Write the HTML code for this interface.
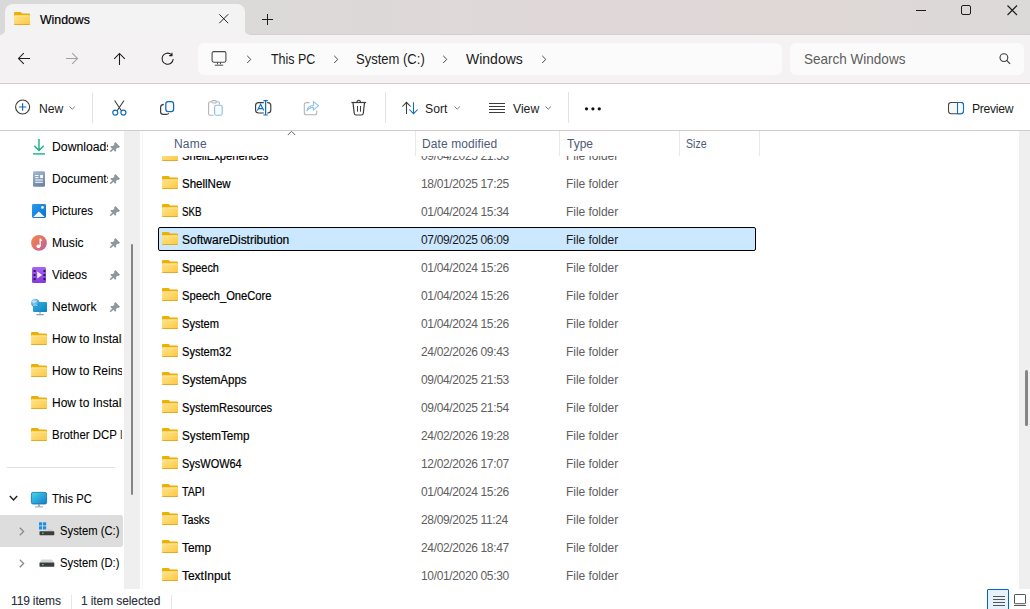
<!DOCTYPE html>
<html><head><meta charset="utf-8">
<style>
*{margin:0;padding:0;box-sizing:border-box}
html,body{width:1030px;height:609px;overflow:hidden;background:#fff;font-family:"Liberation Sans",sans-serif;color:#1a1a1a}
.a{position:absolute}
svg{position:absolute;overflow:visible}
#title{left:0;top:0;width:1030px;height:35px;background:linear-gradient(90deg,#dad9d9 0%,#dcd9d9 25%,#e0d8d8 55%,#dfd8d7 80%,#dcd9d9 100%)}
#tab{left:5px;top:4px;width:240px;height:31px;background:#f3f3f3;border-radius:8px 8px 0 0}
#addr{left:0;top:35px;width:1030px;height:48px;background:#f4f2f2}
.line{background:#d2cbcb;height:1px}
#crumb{left:198px;top:43px;width:584px;height:32px;background:#fbfbfb;border-radius:6px}
#search{left:790px;top:43px;width:234px;height:32px;background:#fbfbfb;border-radius:6px}
.t14{font-size:13.6px;line-height:16px;color:#1c1c1c;white-space:nowrap}
.t13{font-size:12.2px;line-height:16px;color:#1c1c1c;white-space:nowrap}
.t12{font-size:12px;line-height:15px;color:#1a1a1a;white-space:nowrap}
.sep{width:1px;background:#e3e3e3}
#nav{left:0;top:131px;width:124px;height:458px;background:#fff;overflow:hidden}
#navtrack{left:124px;top:131px;width:16px;height:458px;background:#efefef}
#vtrack{left:1019px;top:131px;width:11px;height:458px;background:#efefef}
.nt{font-size:12px;letter-spacing:-0.2px;line-height:15px;color:#000;-webkit-text-stroke:0.08px #000;white-space:nowrap}
.hdr{font-size:12px;line-height:15px;color:#4e5a78;white-space:nowrap}
.row .n{position:absolute;left:182px;font-size:12px;transform-origin:0 0;line-height:15px;color:#000;-webkit-text-stroke:0.2px #000;white-space:nowrap}
.row .d{position:absolute;left:422px;font-size:12px;letter-spacing:-0.35px;line-height:15px;color:#5e5e5e;white-space:nowrap}
.row .ty{position:absolute;left:567px;font-size:12px;letter-spacing:-0.05px;line-height:15px;color:#5e5e5e;white-space:nowrap}
</style></head><body>
<!-- title bar -->
<div id="title" class="a"></div>
<div id="tab" class="a"></div>
<!-- tab flare -->
<div class="a" style="left:0;top:27px;width:5px;height:8px;background:#f3f3f3"></div>
<div class="a" style="left:-3px;top:25px;width:8px;height:10px;background:#dad9d9;border-radius:0 0 5px 0"></div>
<div class="a" style="left:245px;top:27px;width:5px;height:8px;background:#f3f3f3"></div>
<div class="a" style="left:245px;top:25px;width:8px;height:10px;background:#dcd9d9;border-radius:0 0 0 5px"></div>

<div class="a" style="left:250px;top:34px;width:780px;height:1px;background:#d3cdcd"></div>
<!-- folder icon in tab -->
<svg style="left:14px;top:12px" width="16" height="13" viewBox="0 0 16 13"><path d="M0 1.1 Q0 0 1.1 0 H6.3 Q6.9 0 7.3 0.5 L8.3 1.6 H14.9 Q16 1.6 16 2.7 V5 H0Z" fill="#eeaf04"/><path d="M0 3.4 H16 V11.9 Q16 13 14.9 13 H1.1 Q0 13 0 11.9Z" fill="url(#fg2)"/><path d="M0.6 3.9 H15.4" stroke="#ffedb0" stroke-width="0.8"/><path d="M0 12.1 H16 V11.9 Q16 13 14.9 13 H1.1 Q0 13 0 11.9Z" fill="#e6a92a"/></svg>
<div class="a t13" style="left:40px;top:12px;font-size:12.3px;color:#000;-webkit-text-stroke:0.2px #000">Windows</div>
<svg style="left:219px;top:14px" width="10" height="10"><path d="M0.3 0.3 L9.2 9.2 M9.2 0.3 L0.3 9.2" stroke="#1c1c1c" stroke-width="0.95"/></svg>
<svg style="left:262px;top:14px" width="11" height="11"><path d="M5.5 0 V11 M0 5.5 H11" stroke="#1c1c1c" stroke-width="1"/></svg>
<!-- window controls -->
<div class="a" style="left:916px;top:10px;width:10px;height:1px;background:#1c1c1c"></div>
<div class="a" style="left:961px;top:5px;width:10px;height:10px;border:1px solid #1c1c1c;border-radius:2px"></div>
<svg style="left:1007px;top:5px" width="11" height="11"><path d="M0.5 0.5 L10 10 M10 0.5 L0.5 10" stroke="#1c1c1c" stroke-width="1.1"/></svg>

<!-- address row -->
<div id="addr" class="a"></div>
<div class="a line" style="left:0;top:83px;width:1030px"></div>
<svg style="left:17px;top:52px" width="14" height="14"><path d="M13 6.5 H1.5 M6.8 1.2 L1.5 6.5 L6.8 11.8" stroke="#1c1c1c" stroke-width="1.05" fill="none"/></svg>
<svg style="left:65px;top:52px" width="14" height="14"><path d="M1 6.5 H12.5 M7.2 1.2 L12.5 6.5 L7.2 11.8" stroke="#a0a0a0" stroke-width="1.05" fill="none"/></svg>
<svg style="left:113px;top:52px" width="14" height="14"><path d="M6.5 13 V1.5 M1.2 6.8 L6.5 1.5 L11.8 6.8" stroke="#1c1c1c" stroke-width="1.05" fill="none"/></svg>
<svg style="left:161px;top:52px" width="14" height="14"><path d="M12.2 7 A5.6 5.6 0 1 1 10.4 2.6 M11 0.8 V3.6 H8.2" stroke="#1c1c1c" stroke-width="1.05" fill="none"/></svg>
<div id="crumb" class="a"></div>
<svg style="left:211px;top:51px" width="16" height="16"><rect x="1.1" y="0.6" width="13.8" height="10.6" rx="1.6" stroke="#4a4a4a" stroke-width="1.1" fill="none"/><path d="M6.5 11.5 V13.3 M9.5 11.5 V13.3 M3.8 14.2 H12.2" stroke="#4a4a4a" stroke-width="1"/></svg>
<svg style="left:246px;top:55px" width="7" height="9"><path d="M1.2 0.8 L4.8 4.4 L1.2 8" stroke="#3a3a3a" stroke-width="0.95" fill="none"/></svg>
<div class="a t14" style="left:271px;top:51px;font-size:14.5px;transform-origin:0 0;transform:scaleX(0.86)">This PC</div>
<svg style="left:333px;top:55px" width="7" height="9"><path d="M1.2 0.8 L4.8 4.4 L1.2 8" stroke="#3a3a3a" stroke-width="0.95" fill="none"/></svg>
<div class="a t14" style="left:356px;top:51px;font-size:14.5px;transform-origin:0 0;transform:scaleX(0.898)">System (C:)</div>
<svg style="left:442px;top:55px" width="7" height="9"><path d="M1.2 0.8 L4.8 4.4 L1.2 8" stroke="#3a3a3a" stroke-width="0.95" fill="none"/></svg>
<div class="a t14" style="left:466px;top:51px;font-size:14.5px;transform-origin:0 0;transform:scaleX(0.965)">Windows</div>
<svg style="left:541px;top:55px" width="7" height="9"><path d="M1.2 0.8 L4.8 4.4 L1.2 8" stroke="#3a3a3a" stroke-width="0.95" fill="none"/></svg>
<div id="search" class="a"></div>
<div class="a t14" style="left:804px;top:51px;color:#5d5d5d;font-size:14.5px;transform-origin:0 0;transform:scaleX(0.932)">Search Windows</div>
<svg style="left:999px;top:53px" width="13" height="13"><circle cx="4.9" cy="4.6" r="3.9" stroke="#3a3a3a" stroke-width="1.1" fill="none"/><path d="M7.7 7.4 L11.1 10.8" stroke="#3a3a3a" stroke-width="1.2"/></svg>

<!-- command bar -->
<svg style="left:15px;top:99px" width="16" height="16"><circle cx="7.6" cy="8" r="7" stroke="#3b3b3b" stroke-width="1.1" fill="none"/><path d="M7.6 4.3 V11.7 M3.9 8 H11.3" stroke="#0f6cbd" stroke-width="1.2"/></svg>
<div class="a t13" style="left:39px;top:101px">New</div>
<svg style="left:69px;top:106px" width="7" height="4"><path d="M0.5 0.5 L3.2 3.2 L5.9 0.5" stroke="#6a6a6a" stroke-width="0.9" fill="none"/></svg>
<div class="a sep" style="left:92px;top:93px;height:30px"></div>
<!-- cut -->
<svg style="left:112px;top:100px" width="15" height="16"><path d="M2.6 0.5 L9.6 11 M12 0.5 L5 11" stroke="#3b3b3b" stroke-width="1.1" fill="none"/><circle cx="3.3" cy="12.6" r="2.5" stroke="#0f6cbd" stroke-width="1.2" fill="none"/><circle cx="11.4" cy="12.6" r="2.5" stroke="#0f6cbd" stroke-width="1.2" fill="none"/></svg>
<!-- copy -->
<svg style="left:160px;top:101px" width="15" height="15"><path d="M3.8 3.3 Q0.6 3.5 0.6 6.2 V10.8 Q0.6 13.4 3.2 13.4 H6.2 Q8.2 13.4 8.7 12.1" stroke="#3b3b3b" stroke-width="1.2" fill="none"/><rect x="5.8" y="0.6" width="7.8" height="10" rx="2.3" stroke="#0f6cbd" stroke-width="1.25" fill="#fafafa"/></svg>
<!-- paste disabled -->
<svg style="left:208px;top:100px" width="15" height="16"><path d="M3.6 1.8 H2.2 Q0.6 1.8 0.6 3.4 V13.8 Q0.6 15.3 2.1 15.3 H5.6 M8.4 1.8 H9.9 Q11.4 1.8 11.4 3.3 V4.6" stroke="#b4b4b4" stroke-width="1.1" fill="none"/><rect x="3.8" y="0.6" width="4.6" height="2.4" rx="1.2" stroke="#b4b4b4" stroke-width="1.1" fill="#fff"/><rect x="6.6" y="5.2" width="7.6" height="10.1" rx="1.8" stroke="#8cc0ea" stroke-width="1.1" fill="#fbfbfb"/></svg>
<!-- rename -->
<svg style="left:255px;top:100px" width="17" height="16"><path d="M8.8 2.6 H3.6 Q0.6 2.6 0.6 5.6 V10 Q0.6 13 3.6 13 H8.8 M12.2 2.6 H12.8 Q15.8 2.6 15.8 5.6 V10 Q15.8 13 12.8 13 H12.2" stroke="#3b3b3b" stroke-width="1.15" fill="none"/><path d="M10.6 0.6 V15 M8.4 0.6 H12.8 M8.4 15 H12.8" stroke="#0f6cbd" stroke-width="1.2"/><path d="M2.4 10.6 L5.6 4.3 L8.8 10.6 M3.4 8.6 H7.8" stroke="#0f6cbd" stroke-width="1.1" fill="none"/></svg>
<!-- share disabled -->
<svg style="left:303px;top:100px" width="17" height="16"><path d="M6.5 2.6 H3.6 Q1.3 2.6 1.3 4.9 V12.4 Q1.3 14.7 3.6 14.7 H11.5 Q13.8 14.7 13.8 12.4 V10.6" stroke="#b4b4b4" stroke-width="1.1" fill="none"/><path d="M4 10.7 Q4.4 5.9 10.4 5.5 V1.6 L15.6 5.7 L10.4 10.1 V7.4 Q6.4 7.3 4 10.7Z" stroke="#8cc0ea" stroke-width="1.05" fill="none" stroke-linejoin="round"/></svg>
<!-- delete -->
<svg style="left:351px;top:99px" width="16" height="17"><path d="M0.4 3.5 H15.1" stroke="#3b3b3b" stroke-width="1.2"/><path d="M6 3.3 Q6 1.2 7.75 1.2 Q9.5 1.2 9.5 3.3" stroke="#3b3b3b" stroke-width="1.1" fill="none"/><path d="M2 3.7 L3.2 14.2 Q3.4 16 5.2 16 H10.3 Q12.1 16 12.3 14.2 L13.5 3.7" stroke="#3b3b3b" stroke-width="1.2" fill="none"/><path d="M6.5 7 V12.7 M9.5 7 V12.7" stroke="#3b3b3b" stroke-width="1"/></svg>
<div class="a sep" style="left:385px;top:92px;height:31px"></div>
<!-- sort -->
<svg style="left:402px;top:101px" width="17" height="14"><path d="M4.5 13 V1.3 M0.4 5.5 L4.5 1.3 L8.6 5.5" stroke="#3b3b3b" stroke-width="1.05" fill="none"/><path d="M11.5 1.2 V12.7 M7.3 8.5 L11.5 12.7 L15.7 8.5" stroke="#0f6cbd" stroke-width="1.05" fill="none"/></svg>
<div class="a t13" style="left:425px;top:101px">Sort</div>
<svg style="left:454px;top:106px" width="7" height="4"><path d="M0.5 0.5 L3.2 3.2 L5.9 0.5" stroke="#6a6a6a" stroke-width="0.9" fill="none"/></svg>
<!-- view -->
<svg style="left:489px;top:102px" width="16" height="12"><path d="M0 1.5 H16 M0 4.5 H16 M0 7.5 H16 M0 10.5 H16" stroke="#3b3b3b" stroke-width="1"/></svg>
<div class="a t13" style="left:513px;top:101px">View</div>
<svg style="left:545px;top:106px" width="7" height="4"><path d="M0.5 0.5 L3.2 3.2 L5.9 0.5" stroke="#6a6a6a" stroke-width="0.9" fill="none"/></svg>
<div class="a sep" style="left:568px;top:92px;height:31px"></div>
<!-- more -->
<svg style="left:580px;top:103px" width="26" height="12"><circle cx="6.5" cy="5.8" r="1.6" fill="#111"/><circle cx="12.9" cy="5.8" r="1.6" fill="#111"/><circle cx="19.3" cy="5.8" r="1.6" fill="#111"/></svg>
<!-- preview -->
<svg style="left:948px;top:102px" width="17" height="13"><rect x="0.5" y="0.5" width="15" height="11.2" rx="2.6" stroke="#444" stroke-width="1.05" fill="#f8f8f8"/><path d="M9.5 0.5 H12.9 Q15.5 0.5 15.5 3.1 V9.1 Q15.5 11.7 12.9 11.7 H9.5 Z" stroke="#0f6cbd" stroke-width="1.05" fill="#f8f8f8"/></svg>
<div class="a t13" style="left:972px;top:101px;letter-spacing:-0.3px">Preview</div>
<div class="a line" style="left:0;top:130px;width:1030px"></div>

<!-- nav pane -->
<div id="navtrack" class="a"></div>
<div class="a" style="left:131px;top:244px;width:2px;height:251px;background:#858585;border-radius:1px"></div>
<div class="a" style="left:142px;top:131px;width:1px;height:458px;background:#f6f6f6"></div>
<svg width="0" height="0" style="position:absolute"><defs><linearGradient id="fg2" x1="0" y1="0" x2="1" y2="1"><stop offset="0" stop-color="#ffe38f"/><stop offset="1" stop-color="#fcc93d"/></linearGradient></defs></svg>
<!-- downloads -->
<svg style="left:33px;top:139px" width="13" height="16"><path d="M6 0 V11.5 M1.3 6.8 L6 11.5 L10.7 6.8" stroke="#19ad80" stroke-width="1.4" fill="none"/><path d="M0 14.9 H12" stroke="#22b98a" stroke-width="1.5"/></svg>
<div class="a nt" style="left:52px;top:140px;width:55px;overflow:hidden;transform-origin:0 0;letter-spacing:0;transform:scaleX(1.019)">Downloads</div>
<svg style="left:110px;top:142px" width="10" height="10"><path d="M5.3 0 L10 4.7 L8.6 5.9 L7.3 5.7 L6 7 L6.1 8.9 L5.2 9.7 L0.3 4.8 L1.1 3.9 L3 4 L4.3 2.7 L4.1 1.4Z" fill="#8e979e"/><path d="M2.9 7.1 L0.2 9.8" stroke="#8e979e" stroke-width="1.5"/></svg>
<!-- documents -->
<svg style="left:33px;top:171px" width="12" height="16"><defs><linearGradient id="dg" x1="0" y1="0" x2="0.4" y2="1"><stop offset="0" stop-color="#a6b9d3"/><stop offset="1" stop-color="#6f86aa"/></linearGradient></defs><rect x="0" y="0.2" width="12" height="15.6" rx="1.3" fill="url(#dg)"/><path d="M2.2 4.5 H5.6 M2.2 6.6 H5.6 M2.2 9 H9.9 M2.2 11.3 H9.9" stroke="#fff" stroke-width="1"/><rect x="7.2" y="3.9" width="2.7" height="3.2" fill="#fff"/></svg>
<div class="a nt" style="left:52px;top:172px;width:55.5px;overflow:hidden;transform-origin:0 0;letter-spacing:0;transform:scaleX(1.0)">Documents</div>
<svg style="left:110px;top:174px" width="10" height="10"><path d="M5.3 0 L10 4.7 L8.6 5.9 L7.3 5.7 L6 7 L6.1 8.9 L5.2 9.7 L0.3 4.8 L1.1 3.9 L3 4 L4.3 2.7 L4.1 1.4Z" fill="#8e979e"/><path d="M2.9 7.1 L0.2 9.8" stroke="#8e979e" stroke-width="1.5"/></svg>
<!-- pictures -->
<svg style="left:32px;top:204px" width="14" height="14"><defs><linearGradient id="pg" x1="0" y1="0" x2="1" y2="1"><stop offset="0" stop-color="#2a9cf2"/><stop offset="1" stop-color="#0d6fc4"/></linearGradient></defs><rect x="0" y="0" width="14" height="14" rx="1.4" fill="url(#pg)"/><path d="M1.2 13 L6.9 7.4 L12.8 13Z" fill="#f2f8fd"/><circle cx="10.5" cy="3.4" r="1.3" fill="#fff"/></svg>
<div class="a nt" style="left:52px;top:204px;transform-origin:0 0;letter-spacing:0;transform:scaleX(0.946)">Pictures</div>
<svg style="left:110px;top:206px" width="10" height="10"><path d="M5.3 0 L10 4.7 L8.6 5.9 L7.3 5.7 L6 7 L6.1 8.9 L5.2 9.7 L0.3 4.8 L1.1 3.9 L3 4 L4.3 2.7 L4.1 1.4Z" fill="#8e979e"/><path d="M2.9 7.1 L0.2 9.8" stroke="#8e979e" stroke-width="1.5"/></svg>
<!-- music -->
<svg style="left:31px;top:235px" width="16" height="16"><defs><linearGradient id="mg" x1="0" y1="0" x2="1" y2="1"><stop offset="0" stop-color="#f08a45"/><stop offset="0.55" stop-color="#dc7070"/><stop offset="1" stop-color="#b45db0"/></linearGradient></defs><circle cx="8" cy="7.9" r="7.9" fill="url(#mg)"/><path d="M9.2 11.2 V3.6 Q9.6 4.9 11 5.6" stroke="#fff" stroke-width="1.3" fill="none"/><circle cx="7.4" cy="11.3" r="1.9" fill="#fff"/></svg>
<div class="a nt" style="left:52px;top:236px;transform-origin:0 0;letter-spacing:0;transform:scaleX(1.011)">Music</div>
<svg style="left:110px;top:238px" width="10" height="10"><path d="M5.3 0 L10 4.7 L8.6 5.9 L7.3 5.7 L6 7 L6.1 8.9 L5.2 9.7 L0.3 4.8 L1.1 3.9 L3 4 L4.3 2.7 L4.1 1.4Z" fill="#8e979e"/><path d="M2.9 7.1 L0.2 9.8" stroke="#8e979e" stroke-width="1.5"/></svg>
<!-- videos -->
<svg style="left:32px;top:267px" width="14" height="16"><defs><linearGradient id="vg" x1="0" y1="0" x2="0" y2="1"><stop offset="0" stop-color="#a765f2"/><stop offset="1" stop-color="#8439dc"/></linearGradient></defs><rect x="0" y="0" width="14" height="16" rx="1.5" fill="url(#vg)"/><path d="M5.2 4.6 L10.2 8 L5.2 11.5Z" fill="#f4eefc"/><g fill="#2d1a55"><rect x="1.6" y="3" width="2" height="2"/><rect x="1.6" y="7" width="2" height="2"/><rect x="1.6" y="11" width="2" height="2"/><rect x="11.4" y="3" width="2" height="2"/><rect x="11.4" y="7" width="2" height="2"/><rect x="11.4" y="11" width="2" height="2"/></g></svg>
<div class="a nt" style="left:52px;top:268px;transform-origin:0 0;letter-spacing:0;transform:scaleX(0.96)">Videos</div>
<svg style="left:110px;top:270px" width="10" height="10"><path d="M5.3 0 L10 4.7 L8.6 5.9 L7.3 5.7 L6 7 L6.1 8.9 L5.2 9.7 L0.3 4.8 L1.1 3.9 L3 4 L4.3 2.7 L4.1 1.4Z" fill="#8e979e"/><path d="M2.9 7.1 L0.2 9.8" stroke="#8e979e" stroke-width="1.5"/></svg>
<!-- network -->
<svg style="left:31px;top:298px" width="17" height="18"><defs><linearGradient id="ng" x1="0" y1="0" x2="1" y2="1"><stop offset="0" stop-color="#33b6e8"/><stop offset="1" stop-color="#0b7fbf"/></linearGradient><radialGradient id="gg" cx="0.35" cy="0.3" r="0.8"><stop offset="0" stop-color="#b9e4f7"/><stop offset="0.6" stop-color="#4aa6d8"/><stop offset="1" stop-color="#2a78b8"/></radialGradient></defs><rect x="2" y="4" width="14" height="10" rx="1" fill="url(#ng)"/><path d="M9 14 V16 M5.3 16.6 H12.8" stroke="#8fa3b0" stroke-width="1.1"/><circle cx="4.3" cy="5" r="4.3" fill="url(#gg)"/><path d="M1.2 3.6 Q3 5 5.5 3.2 M2.4 7.4 Q4 6.2 6.5 7.6" stroke="#d6f0fb" stroke-width="0.8" fill="none"/></svg>
<div class="a nt" style="left:52px;top:300px;transform-origin:0 0;letter-spacing:0;transform:scaleX(1.01)">Network</div>
<svg style="left:110px;top:302px" width="10" height="10"><path d="M5.3 0 L10 4.7 L8.6 5.9 L7.3 5.7 L6 7 L6.1 8.9 L5.2 9.7 L0.3 4.8 L1.1 3.9 L3 4 L4.3 2.7 L4.1 1.4Z" fill="#8e979e"/><path d="M2.9 7.1 L0.2 9.8" stroke="#8e979e" stroke-width="1.5"/></svg>
<!-- quick folders -->
<svg style="left:31px;top:332px" width="16" height="13" viewBox="0 0 16 13"><path d="M0 1.1 Q0 0 1.1 0 H6.3 Q6.9 0 7.3 0.5 L8.3 1.6 H14.9 Q16 1.6 16 2.7 V5 H0Z" fill="#eeaf04"/><path d="M0 3.4 H16 V11.9 Q16 13 14.9 13 H1.1 Q0 13 0 11.9Z" fill="url(#fg2)"/><path d="M0.6 3.9 H15.4" stroke="#ffedb0" stroke-width="0.8"/><path d="M0 12.1 H16 V11.9 Q16 13 14.9 13 H1.1 Q0 13 0 11.9Z" fill="#e6a92a"/></svg>
<div class="a nt" style="left:52px;top:332px;width:70px;overflow:hidden;transform-origin:0 0;letter-spacing:0;">How to Install</div>
<svg style="left:31px;top:364px" width="16" height="13" viewBox="0 0 16 13"><path d="M0 1.1 Q0 0 1.1 0 H6.3 Q6.9 0 7.3 0.5 L8.3 1.6 H14.9 Q16 1.6 16 2.7 V5 H0Z" fill="#eeaf04"/><path d="M0 3.4 H16 V11.9 Q16 13 14.9 13 H1.1 Q0 13 0 11.9Z" fill="url(#fg2)"/><path d="M0.6 3.9 H15.4" stroke="#ffedb0" stroke-width="0.8"/><path d="M0 12.1 H16 V11.9 Q16 13 14.9 13 H1.1 Q0 13 0 11.9Z" fill="#e6a92a"/></svg>
<div class="a nt" style="left:52px;top:364px;width:70px;overflow:hidden;transform-origin:0 0;letter-spacing:0;">How to Reinstall</div>
<svg style="left:31px;top:396px" width="16" height="13" viewBox="0 0 16 13"><path d="M0 1.1 Q0 0 1.1 0 H6.3 Q6.9 0 7.3 0.5 L8.3 1.6 H14.9 Q16 1.6 16 2.7 V5 H0Z" fill="#eeaf04"/><path d="M0 3.4 H16 V11.9 Q16 13 14.9 13 H1.1 Q0 13 0 11.9Z" fill="url(#fg2)"/><path d="M0.6 3.9 H15.4" stroke="#ffedb0" stroke-width="0.8"/><path d="M0 12.1 H16 V11.9 Q16 13 14.9 13 H1.1 Q0 13 0 11.9Z" fill="#e6a92a"/></svg>
<div class="a nt" style="left:52px;top:396px;width:70px;overflow:hidden;transform-origin:0 0;letter-spacing:0;">How to Install</div>
<svg style="left:31px;top:428px" width="16" height="13" viewBox="0 0 16 13"><path d="M0 1.1 Q0 0 1.1 0 H6.3 Q6.9 0 7.3 0.5 L8.3 1.6 H14.9 Q16 1.6 16 2.7 V5 H0Z" fill="#eeaf04"/><path d="M0 3.4 H16 V11.9 Q16 13 14.9 13 H1.1 Q0 13 0 11.9Z" fill="url(#fg2)"/><path d="M0.6 3.9 H15.4" stroke="#ffedb0" stroke-width="0.8"/><path d="M0 12.1 H16 V11.9 Q16 13 14.9 13 H1.1 Q0 13 0 11.9Z" fill="#e6a92a"/></svg>
<div class="a nt" style="left:52px;top:428px;width:73px;overflow:hidden;transform-origin:0 0;letter-spacing:0;transform:scaleX(0.955)">Brother DCP L</div>
<div class="a" style="left:7px;top:467px;width:108px;height:1px;background:#e0e0e0"></div>
<!-- this pc -->
<svg style="left:9px;top:495px" width="10" height="7"><path d="M0.8 1 L4.5 4.9 L8.2 1" stroke="#222" stroke-width="1.45" fill="none"/></svg>
<svg style="left:31px;top:492px" width="16" height="16"><defs><linearGradient id="pcg" x1="0" y1="0" x2="1" y2="1"><stop offset="0" stop-color="#3fdbe9"/><stop offset="1" stop-color="#1877cc"/></linearGradient></defs><rect x="0.4" y="0.4" width="15.2" height="11.6" rx="1.6" fill="url(#pcg)" stroke="#176c9f" stroke-width="0.8"/><rect x="7" y="12" width="2" height="2.4" fill="#95a6b3"/><path d="M4 14.9 H12" stroke="#9aabb8" stroke-width="1.1"/></svg>
<div class="a nt" style="left:52px;top:492px;transform-origin:0 0;letter-spacing:0;transform:scaleX(0.933)">This PC</div>
<div class="a" style="left:0;top:515px;width:123px;height:32px;background:#dddddd;border-radius:0 3px 3px 0"></div>
<svg style="left:19px;top:527px" width="6" height="9"><path d="M0.8 0.7 L4.6 4.5 L0.8 8.3" stroke="#8c8c8c" stroke-width="1.3" fill="none"/></svg>
<svg style="left:39px;top:522px" width="16" height="14"><g fill="#1d8fe6"><rect x="0" y="0.3" width="3.2" height="3.2"/><rect x="4" y="0.3" width="3.2" height="3.2"/><rect x="0" y="4.3" width="3.2" height="3.2"/><rect x="4" y="4.3" width="3.2" height="3.2"/></g><path d="M8.5 7 H12.6 L15 9.6 H8.5Z" fill="#cfcfcf"/><rect x="0.5" y="9.2" width="14.8" height="4" rx="0.6" fill="#3c3c3c"/><rect x="3" y="10.6" width="1.6" height="1.2" fill="#45d96f"/></svg>
<div class="a nt" style="left:60px;top:524px;transform-origin:0 0;letter-spacing:0;transform:scaleX(0.938)">System (C:)</div>
<svg style="left:19px;top:559px" width="6" height="9"><path d="M0.8 0.7 L4.6 4.5 L0.8 8.3" stroke="#8c8c8c" stroke-width="1.3" fill="none"/></svg>
<svg style="left:39px;top:559px" width="16" height="9"><path d="M2.8 0.5 H12.6 L15.3 3.6 H0.5Z" fill="#d4d4d4"/><rect x="0.5" y="3.4" width="14.8" height="4.4" rx="0.6" fill="#3c3c3c"/><rect x="3" y="5" width="1.6" height="1.2" fill="#45d96f"/></svg>
<div class="a nt" style="left:60px;top:556px;transform-origin:0 0;letter-spacing:0;transform:scaleX(0.938)">System (D:)</div>

<!-- file list -->
<div id="vtrack" class="a"></div>
<div class="a" style="left:1025px;top:370px;width:3px;height:56px;background:#858585;border-radius:1.5px"></div>
<div id="list" class="a" style="left:141px;top:156px;width:878px;height:433px;overflow:hidden">
<div class="a" style="left:17px;top:71px;width:598px;height:24px;background:#cce8ff;border:1px solid #000;border-radius:2px"></div>
<div class="row"><svg style="left:21px;top:-8px" width="16" height="13" viewBox="0 0 16 13"><path d="M0 1.1 Q0 0 1.1 0 H6.3 Q6.9 0 7.3 0.5 L8.3 1.6 H14.9 Q16 1.6 16 2.7 V5 H0Z" fill="#eeaf04"/><path d="M0 3.4 H16 V11.9 Q16 13 14.9 13 H1.1 Q0 13 0 11.9Z" fill="url(#fg2)"/><path d="M0.6 3.9 H15.4" stroke="#ffedb0" stroke-width="0.8"/><path d="M0 12.1 H16 V11.9 Q16 13 14.9 13 H1.1 Q0 13 0 11.9Z" fill="#e6a92a"/></svg><div class="n" style="transform:scaleX(0.930);left:41px;top:-7px">ShellExperiences</div><div class="d" style="left:280px;top:-7px">09/04/2025 21:53</div><div class="ty" style="left:425px;top:-7px">File folder</div></div>
<div class="row"><svg style="left:21px;top:20px" width="16" height="13" viewBox="0 0 16 13"><path d="M0 1.1 Q0 0 1.1 0 H6.3 Q6.9 0 7.3 0.5 L8.3 1.6 H14.9 Q16 1.6 16 2.7 V5 H0Z" fill="#eeaf04"/><path d="M0 3.4 H16 V11.9 Q16 13 14.9 13 H1.1 Q0 13 0 11.9Z" fill="url(#fg2)"/><path d="M0.6 3.9 H15.4" stroke="#ffedb0" stroke-width="0.8"/><path d="M0 12.1 H16 V11.9 Q16 13 14.9 13 H1.1 Q0 13 0 11.9Z" fill="#e6a92a"/></svg><div class="n" style="transform:scaleX(0.960);left:41px;top:21px">ShellNew</div><div class="d" style="left:280px;top:21px">18/01/2025 17:25</div><div class="ty" style="left:425px;top:21px">File folder</div></div>
<div class="row"><svg style="left:21px;top:48px" width="16" height="13" viewBox="0 0 16 13"><path d="M0 1.1 Q0 0 1.1 0 H6.3 Q6.9 0 7.3 0.5 L8.3 1.6 H14.9 Q16 1.6 16 2.7 V5 H0Z" fill="#eeaf04"/><path d="M0 3.4 H16 V11.9 Q16 13 14.9 13 H1.1 Q0 13 0 11.9Z" fill="url(#fg2)"/><path d="M0.6 3.9 H15.4" stroke="#ffedb0" stroke-width="0.8"/><path d="M0 12.1 H16 V11.9 Q16 13 14.9 13 H1.1 Q0 13 0 11.9Z" fill="#e6a92a"/></svg><div class="n" style="transform:scaleX(0.812);left:41px;top:49px">SKB</div><div class="d" style="left:280px;top:49px">01/04/2024 15:34</div><div class="ty" style="left:425px;top:49px">File folder</div></div>
<div class="row"><svg style="left:21px;top:76px" width="16" height="13" viewBox="0 0 16 13"><path d="M0 1.1 Q0 0 1.1 0 H6.3 Q6.9 0 7.3 0.5 L8.3 1.6 H14.9 Q16 1.6 16 2.7 V5 H0Z" fill="#eeaf04"/><path d="M0 3.4 H16 V11.9 Q16 13 14.9 13 H1.1 Q0 13 0 11.9Z" fill="url(#fg2)"/><path d="M0.6 3.9 H15.4" stroke="#ffedb0" stroke-width="0.8"/><path d="M0 12.1 H16 V11.9 Q16 13 14.9 13 H1.1 Q0 13 0 11.9Z" fill="#e6a92a"/></svg><div class="n" style="transform:scaleX(0.999);left:41px;top:77px">SoftwareDistribution</div><div class="d" style="color:#1a1a1a;left:280px;top:77px">07/09/2025 06:09</div><div class="ty" style="color:#1a1a1a;left:425px;top:77px">File folder</div></div>
<div class="row"><svg style="left:21px;top:104px" width="16" height="13" viewBox="0 0 16 13"><path d="M0 1.1 Q0 0 1.1 0 H6.3 Q6.9 0 7.3 0.5 L8.3 1.6 H14.9 Q16 1.6 16 2.7 V5 H0Z" fill="#eeaf04"/><path d="M0 3.4 H16 V11.9 Q16 13 14.9 13 H1.1 Q0 13 0 11.9Z" fill="url(#fg2)"/><path d="M0.6 3.9 H15.4" stroke="#ffedb0" stroke-width="0.8"/><path d="M0 12.1 H16 V11.9 Q16 13 14.9 13 H1.1 Q0 13 0 11.9Z" fill="#e6a92a"/></svg><div class="n" style="transform:scaleX(0.907);left:41px;top:105px">Speech</div><div class="d" style="left:280px;top:105px">01/04/2024 15:26</div><div class="ty" style="left:425px;top:105px">File folder</div></div>
<div class="row"><svg style="left:21px;top:132px" width="16" height="13" viewBox="0 0 16 13"><path d="M0 1.1 Q0 0 1.1 0 H6.3 Q6.9 0 7.3 0.5 L8.3 1.6 H14.9 Q16 1.6 16 2.7 V5 H0Z" fill="#eeaf04"/><path d="M0 3.4 H16 V11.9 Q16 13 14.9 13 H1.1 Q0 13 0 11.9Z" fill="url(#fg2)"/><path d="M0.6 3.9 H15.4" stroke="#ffedb0" stroke-width="0.8"/><path d="M0 12.1 H16 V11.9 Q16 13 14.9 13 H1.1 Q0 13 0 11.9Z" fill="#e6a92a"/></svg><div class="n" style="transform:scaleX(0.932);left:41px;top:133px">Speech_OneCore</div><div class="d" style="left:280px;top:133px">01/04/2024 15:26</div><div class="ty" style="left:425px;top:133px">File folder</div></div>
<div class="row"><svg style="left:21px;top:160px" width="16" height="13" viewBox="0 0 16 13"><path d="M0 1.1 Q0 0 1.1 0 H6.3 Q6.9 0 7.3 0.5 L8.3 1.6 H14.9 Q16 1.6 16 2.7 V5 H0Z" fill="#eeaf04"/><path d="M0 3.4 H16 V11.9 Q16 13 14.9 13 H1.1 Q0 13 0 11.9Z" fill="url(#fg2)"/><path d="M0.6 3.9 H15.4" stroke="#ffedb0" stroke-width="0.8"/><path d="M0 12.1 H16 V11.9 Q16 13 14.9 13 H1.1 Q0 13 0 11.9Z" fill="#e6a92a"/></svg><div class="n" style="transform:scaleX(0.925);left:41px;top:161px">System</div><div class="d" style="left:280px;top:161px">01/04/2024 15:26</div><div class="ty" style="left:425px;top:161px">File folder</div></div>
<div class="row"><svg style="left:21px;top:188px" width="16" height="13" viewBox="0 0 16 13"><path d="M0 1.1 Q0 0 1.1 0 H6.3 Q6.9 0 7.3 0.5 L8.3 1.6 H14.9 Q16 1.6 16 2.7 V5 H0Z" fill="#eeaf04"/><path d="M0 3.4 H16 V11.9 Q16 13 14.9 13 H1.1 Q0 13 0 11.9Z" fill="url(#fg2)"/><path d="M0.6 3.9 H15.4" stroke="#ffedb0" stroke-width="0.8"/><path d="M0 12.1 H16 V11.9 Q16 13 14.9 13 H1.1 Q0 13 0 11.9Z" fill="#e6a92a"/></svg><div class="n" style="transform:scaleX(0.926);left:41px;top:189px">System32</div><div class="d" style="left:280px;top:189px">24/02/2026 09:43</div><div class="ty" style="left:425px;top:189px">File folder</div></div>
<div class="row"><svg style="left:21px;top:216px" width="16" height="13" viewBox="0 0 16 13"><path d="M0 1.1 Q0 0 1.1 0 H6.3 Q6.9 0 7.3 0.5 L8.3 1.6 H14.9 Q16 1.6 16 2.7 V5 H0Z" fill="#eeaf04"/><path d="M0 3.4 H16 V11.9 Q16 13 14.9 13 H1.1 Q0 13 0 11.9Z" fill="url(#fg2)"/><path d="M0.6 3.9 H15.4" stroke="#ffedb0" stroke-width="0.8"/><path d="M0 12.1 H16 V11.9 Q16 13 14.9 13 H1.1 Q0 13 0 11.9Z" fill="#e6a92a"/></svg><div class="n" style="transform:scaleX(0.959);left:41px;top:217px">SystemApps</div><div class="d" style="left:280px;top:217px">09/04/2025 21:53</div><div class="ty" style="left:425px;top:217px">File folder</div></div>
<div class="row"><svg style="left:21px;top:244px" width="16" height="13" viewBox="0 0 16 13"><path d="M0 1.1 Q0 0 1.1 0 H6.3 Q6.9 0 7.3 0.5 L8.3 1.6 H14.9 Q16 1.6 16 2.7 V5 H0Z" fill="#eeaf04"/><path d="M0 3.4 H16 V11.9 Q16 13 14.9 13 H1.1 Q0 13 0 11.9Z" fill="url(#fg2)"/><path d="M0.6 3.9 H15.4" stroke="#ffedb0" stroke-width="0.8"/><path d="M0 12.1 H16 V11.9 Q16 13 14.9 13 H1.1 Q0 13 0 11.9Z" fill="#e6a92a"/></svg><div class="n" style="transform:scaleX(0.926);left:41px;top:245px">SystemResources</div><div class="d" style="left:280px;top:245px">09/04/2025 21:54</div><div class="ty" style="left:425px;top:245px">File folder</div></div>
<div class="row"><svg style="left:21px;top:272px" width="16" height="13" viewBox="0 0 16 13"><path d="M0 1.1 Q0 0 1.1 0 H6.3 Q6.9 0 7.3 0.5 L8.3 1.6 H14.9 Q16 1.6 16 2.7 V5 H0Z" fill="#eeaf04"/><path d="M0 3.4 H16 V11.9 Q16 13 14.9 13 H1.1 Q0 13 0 11.9Z" fill="url(#fg2)"/><path d="M0.6 3.9 H15.4" stroke="#ffedb0" stroke-width="0.8"/><path d="M0 12.1 H16 V11.9 Q16 13 14.9 13 H1.1 Q0 13 0 11.9Z" fill="#e6a92a"/></svg><div class="n" style="transform:scaleX(0.973);left:41px;top:273px">SystemTemp</div><div class="d" style="left:280px;top:273px">24/02/2026 19:28</div><div class="ty" style="left:425px;top:273px">File folder</div></div>
<div class="row"><svg style="left:21px;top:300px" width="16" height="13" viewBox="0 0 16 13"><path d="M0 1.1 Q0 0 1.1 0 H6.3 Q6.9 0 7.3 0.5 L8.3 1.6 H14.9 Q16 1.6 16 2.7 V5 H0Z" fill="#eeaf04"/><path d="M0 3.4 H16 V11.9 Q16 13 14.9 13 H1.1 Q0 13 0 11.9Z" fill="url(#fg2)"/><path d="M0.6 3.9 H15.4" stroke="#ffedb0" stroke-width="0.8"/><path d="M0 12.1 H16 V11.9 Q16 13 14.9 13 H1.1 Q0 13 0 11.9Z" fill="#e6a92a"/></svg><div class="n" style="transform:scaleX(0.914);left:41px;top:301px">SysWOW64</div><div class="d" style="left:280px;top:301px">12/02/2026 17:07</div><div class="ty" style="left:425px;top:301px">File folder</div></div>
<div class="row"><svg style="left:21px;top:328px" width="16" height="13" viewBox="0 0 16 13"><path d="M0 1.1 Q0 0 1.1 0 H6.3 Q6.9 0 7.3 0.5 L8.3 1.6 H14.9 Q16 1.6 16 2.7 V5 H0Z" fill="#eeaf04"/><path d="M0 3.4 H16 V11.9 Q16 13 14.9 13 H1.1 Q0 13 0 11.9Z" fill="url(#fg2)"/><path d="M0.6 3.9 H15.4" stroke="#ffedb0" stroke-width="0.8"/><path d="M0 12.1 H16 V11.9 Q16 13 14.9 13 H1.1 Q0 13 0 11.9Z" fill="#e6a92a"/></svg><div class="n" style="transform:scaleX(0.884);left:41px;top:329px">TAPI</div><div class="d" style="left:280px;top:329px">01/04/2024 15:26</div><div class="ty" style="left:425px;top:329px">File folder</div></div>
<div class="row"><svg style="left:21px;top:356px" width="16" height="13" viewBox="0 0 16 13"><path d="M0 1.1 Q0 0 1.1 0 H6.3 Q6.9 0 7.3 0.5 L8.3 1.6 H14.9 Q16 1.6 16 2.7 V5 H0Z" fill="#eeaf04"/><path d="M0 3.4 H16 V11.9 Q16 13 14.9 13 H1.1 Q0 13 0 11.9Z" fill="url(#fg2)"/><path d="M0.6 3.9 H15.4" stroke="#ffedb0" stroke-width="0.8"/><path d="M0 12.1 H16 V11.9 Q16 13 14.9 13 H1.1 Q0 13 0 11.9Z" fill="#e6a92a"/></svg><div class="n" style="transform:scaleX(0.900);left:41px;top:357px">Tasks</div><div class="d" style="left:280px;top:357px">28/09/2025 11:24</div><div class="ty" style="left:425px;top:357px">File folder</div></div>
<div class="row"><svg style="left:21px;top:384px" width="16" height="13" viewBox="0 0 16 13"><path d="M0 1.1 Q0 0 1.1 0 H6.3 Q6.9 0 7.3 0.5 L8.3 1.6 H14.9 Q16 1.6 16 2.7 V5 H0Z" fill="#eeaf04"/><path d="M0 3.4 H16 V11.9 Q16 13 14.9 13 H1.1 Q0 13 0 11.9Z" fill="url(#fg2)"/><path d="M0.6 3.9 H15.4" stroke="#ffedb0" stroke-width="0.8"/><path d="M0 12.1 H16 V11.9 Q16 13 14.9 13 H1.1 Q0 13 0 11.9Z" fill="#e6a92a"/></svg><div class="n" style="transform:scaleX(0.988);left:41px;top:385px">Temp</div><div class="d" style="left:280px;top:385px">24/02/2026 18:47</div><div class="ty" style="left:425px;top:385px">File folder</div></div>
<div class="row"><svg style="left:21px;top:412px" width="16" height="13" viewBox="0 0 16 13"><path d="M0 1.1 Q0 0 1.1 0 H6.3 Q6.9 0 7.3 0.5 L8.3 1.6 H14.9 Q16 1.6 16 2.7 V5 H0Z" fill="#eeaf04"/><path d="M0 3.4 H16 V11.9 Q16 13 14.9 13 H1.1 Q0 13 0 11.9Z" fill="url(#fg2)"/><path d="M0.6 3.9 H15.4" stroke="#ffedb0" stroke-width="0.8"/><path d="M0 12.1 H16 V11.9 Q16 13 14.9 13 H1.1 Q0 13 0 11.9Z" fill="#e6a92a"/></svg><div class="n" style="transform:scaleX(0.996);left:41px;top:413px">TextInput</div><div class="d" style="left:280px;top:413px">10/01/2020 05:30</div><div class="ty" style="left:425px;top:413px">File folder</div></div>
</div>

<!-- header -->
<div class="a hdr" style="left:174px;top:137px;letter-spacing:0.2px">Name</div>
<svg style="left:287px;top:130px" width="9" height="6"><path d="M0.8 5 L4.5 1.3 L8.2 5" stroke="#6a6a6a" stroke-width="1" fill="none"/></svg>
<div class="a sep" style="left:415px;top:131px;height:25px;background:#e8e8e8"></div>
<div class="a hdr" style="left:422px;top:137px;letter-spacing:0.1px">Date modified</div>
<div class="a sep" style="left:559px;top:131px;height:25px;background:#e8e8e8"></div>
<div class="a hdr" style="left:567px;top:137px">Type</div>
<div class="a sep" style="left:679px;top:131px;height:25px;background:#e8e8e8"></div>
<div class="a hdr" style="left:686px;top:137px;transform:scaleX(0.88);transform-origin:0 0">Size</div>
<div class="a sep" style="left:759px;top:131px;height:25px;background:#e8e8e8"></div>
<!-- view buttons -->
<div class="a" style="left:987px;top:589px;width:22px;height:22px;background:#e5f1fb;border:1px solid #0067c0;border-radius:1px"></div>
<svg style="left:993px;top:596px" width="12" height="10"><path d="M0 0.5 H12 M0 3.5 H12 M0 6.5 H12 M0 9.5 H12" stroke="#555" stroke-width="1"/></svg>
<svg style="left:1014px;top:594px" width="12" height="12"><rect x="0.5" y="0.5" width="11" height="9.2" rx="0.6" stroke="#555" stroke-width="1" fill="none"/><path d="M0 11.5 H12" stroke="#555" stroke-width="1"/></svg>
<!-- status bar -->
<div class="a nt" style="left:11px;top:594px;letter-spacing:-0.15px;color:#2b3040">119 items</div>
<div class="a" style="left:71px;top:595px;width:1px;height:14px;background:#e6e6e6"></div>
<div class="a nt" style="left:81px;top:594px;letter-spacing:-0.1px;color:#2b3040">1 item selected</div>
<div class="a" style="left:171px;top:595px;width:1px;height:14px;background:#e6e6e6"></div>
</body></html>
